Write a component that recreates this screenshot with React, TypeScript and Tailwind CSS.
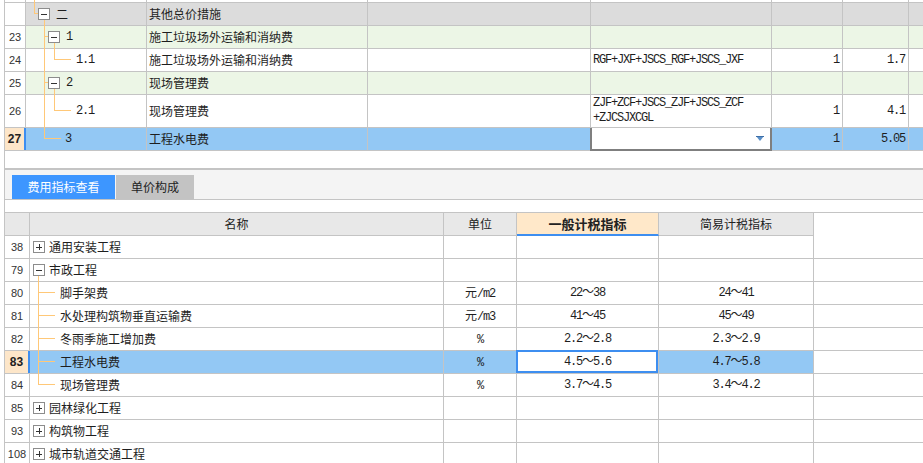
import React from "react";

const MONO = "font-['Liberation_Mono','Noto_Sans_CJK_SC',monospace] tracking-[-1.2px]";
const NUM = "font-['Liberation_Sans',sans-serif] text-[11px] text-[#333]";
const ORANGE = "absolute bg-[#ffc878]";

type TreeKind = "partial" | "root" | "group" | "leaf" | "last";

function Box({ plus, className }: { plus?: boolean; className: string }) {
  return (
    <span
      className={`absolute flex h-[12px] w-[12px] items-center justify-center border border-[#8c8c8c] bg-white ${className}`}
    >
      <span className="absolute h-px w-[6px] bg-[#333]" />
      {plus ? <span className="absolute h-[6px] w-px bg-[#333]" /> : null}
    </span>
  );
}

function TopTree({ kind, code, tall }: { kind: TreeKind; code?: string; tall?: boolean }) {
  const mid = tall ? "top-[15px]" : "top-[10px]";
  const toMid = tall ? "h-[16px]" : "h-[11px]";
  const pad = {
    partial: "pl-0",
    root: "pl-[30px]",
    group: "pl-[40px]",
    leaf: "pl-[50px]",
    last: "pl-[39px]",
  }[kind];

  return (
    <div className={`relative flex h-full items-center ${pad}`}>
      {kind === "partial" && <span className={`${ORANGE} left-[8px] top-0 -bottom-px w-px`} />}
      {kind === "root" && (
        <>
          <span className={`${ORANGE} left-[8px] top-0 h-[11px] w-px`} />
          <span className={`${ORANGE} left-[8px] top-[10px] h-px w-[4px]`} />
          <Box className="left-[12px] top-[5px]" />
          <span className={`${ORANGE} left-[18px] top-[17px] -bottom-px w-px`} />
        </>
      )}
      {kind === "group" && (
        <>
          <span className={`${ORANGE} left-[18px] top-0 -bottom-px w-px`} />
          <span className={`${ORANGE} left-[18px] top-[10px] h-px w-[4px]`} />
          <Box className="left-[22px] top-[5px]" />
          <span className={`${ORANGE} left-[28px] top-[17px] -bottom-px w-px`} />
        </>
      )}
      {kind === "leaf" && (
        <>
          <span className={`${ORANGE} left-[18px] top-0 -bottom-px w-px`} />
          <span className={`${ORANGE} left-[28px] top-0 w-px ${toMid}`} />
          <span className={`${ORANGE} left-[28px] h-px w-[17px] ${mid}`} />
        </>
      )}
      {kind === "last" && (
        <>
          <span className={`${ORANGE} left-[18px] top-0 w-px ${toMid}`} />
          <span className={`${ORANGE} left-[18px] h-px w-[17px] ${mid}`} />
        </>
      )}
      {code ? (
        <span className={/^[0-9.]+$/.test(code) ? `${MONO} text-[12px]` : "text-[12px]"}>{code}</span>
      ) : null}
    </div>
  );
}

type TopRowProps = {
  h: string;
  bg?: string;
  idx?: string;
  kind: TreeKind;
  code?: string;
  name?: string;
  formula?: React.ReactNode;
  qty?: string;
  val?: string;
  active?: boolean;
  tall?: boolean;
};

function TopRow({ h, bg = "bg-white", idx, kind, code, name, formula, qty, val, active, tall }: TopRowProps) {
  const cell = "h-full shrink-0 border-r border-[#c4c4c4]";
  const rowBg = active ? "bg-[#93c8f4]" : bg;
  return (
    <div className={`flex shrink-0 border-b border-[#c4c4c4] ${h}`}>
      <div
        className={`flex w-[21px] items-center justify-center ${cell} ${
          active
            ? "border-r-2 border-r-[#3d8ef0] bg-[#fde6c9] font-['Liberation_Sans',sans-serif] text-[12px] font-bold text-[#222]"
            : `bg-white ${NUM}`
        }`}
      >
        {idx}
      </div>
      <div className={`w-[121px] ${cell} ${rowBg}`}>
        <TopTree kind={kind} code={code} tall={tall} />
      </div>
      <div className={`flex w-[221px] items-center pl-[2px] ${cell} ${rowBg}`}>{name}</div>
      <div className={`w-[223px] ${cell} ${rowBg}`} />
      <div
        className={`relative flex w-[181px] items-center pl-[2px] ${cell} ${active ? "bg-white" : rowBg} ${MONO} text-[12px] leading-[15px]`}
      >
        {formula}
        {active ? (
          <div className="absolute -left-px top-0 -right-px -bottom-px border-2 border-t-0 border-[#7f7f7f]">
            <svg className="absolute right-[6px] top-[8px]" width="8" height="5" viewBox="0 0 8 5">
              <polygon points="0,0 8,0 4,5" fill="#5a8fc8" />
              <rect x="0" y="0" width="8" height="1" fill="#3d6fa8" />
            </svg>
          </div>
        ) : null}
      </div>
      <div className={`flex w-[71px] items-center justify-end pr-[3px] ${cell} ${rowBg} ${MONO} text-[12px]`}>
        {qty}
      </div>
      <div className={`flex w-[66px] items-center justify-end pr-[3px] ${cell} ${rowBg} ${MONO} text-[12px]`}>
        {val}
      </div>
      <div className={`h-full flex-1 ${rowBg}`} />
    </div>
  );
}

function TopGrid() {
  return (
    <div className="flex shrink-0 flex-col">
      <TopRow h="h-[3px]" kind="partial" />
      <TopRow h="h-[23px]" bg="bg-[#dcdcdc]" kind="root" code="二" name="其他总价措施" />
      <TopRow h="h-[23px]" bg="bg-[#ecf6e6]" idx="23" kind="group" code="1" name="施工垃圾场外运输和消纳费" />
      <TopRow
        h="h-[23px]"
        idx="24"
        kind="leaf"
        code="1.1"
        name="施工垃圾场外运输和消纳费"
        formula="RGF+JXF+JSCS_RGF+JSCS_JXF"
        qty="1"
        val="1.7"
      />
      <TopRow h="h-[23px]" bg="bg-[#ecf6e6]" idx="25" kind="group" code="2" name="现场管理费" />
      <TopRow
        h="h-[33px]"
        tall
        idx="26"
        kind="leaf"
        code="2.1"
        name="现场管理费"
        formula={
          <span>
            ZJF+ZCF+JSCS_ZJF+JSCS_ZCF
            <br />
            +ZJCSJXCGL
          </span>
        }
        qty="1"
        val="4.1"
      />
      <TopRow h="h-[23px]" idx="27" kind="last" code="3" name="工程水电费" qty="1" val="5.05" active />
    </div>
  );
}

type BottomKind = "plus" | "minus" | "child" | "lastChild";

type BottomRowProps = {
  idx: string;
  kind: BottomKind;
  name: string;
  unit?: React.ReactNode;
  gen?: string;
  simple?: string;
  active?: boolean;
};

function BottomRow({ idx, kind, name, unit, gen, simple, active }: BottomRowProps) {
  const cell = "h-full shrink-0 border-r border-[#c4c4c4]";
  const bg = active ? "bg-[#93c8f4]" : "bg-white";
  const isChild = kind === "child" || kind === "lastChild";
  return (
    <div className="flex h-[23px] shrink-0 border-b border-[#c4c4c4]">
      <div
        className={`flex w-[25px] items-center justify-center ${cell} ${
          active
            ? "border-r-2 border-r-[#3d8ef0] bg-[#fde6c9] font-['Liberation_Sans',sans-serif] text-[12px] font-bold text-[#222]"
            : NUM
        }`}
      >
        {idx}
      </div>
      <div className={`relative flex w-[414px] items-center ${isChild ? "pl-[30px]" : "pl-[19px]"} ${cell} ${bg}`}>
        {kind === "plus" && <Box plus className="left-[3px] top-[5px]" />}
        {kind === "minus" && (
          <>
            <Box className="left-[3px] top-[5px]" />
            <span className={`${ORANGE} left-[8px] top-[17px] -bottom-px w-px`} />
          </>
        )}
        {kind === "child" && <span className={`${ORANGE} left-[8px] top-0 -bottom-px w-px`} />}
        {kind === "lastChild" && <span className={`${ORANGE} left-[8px] top-0 h-[11px] w-px`} />}
        {isChild && <span className={`${ORANGE} left-[9px] top-[10px] h-px w-[16px]`} />}
        <span className="text-[12px]">{name}</span>
      </div>
      <div className={`flex w-[73px] items-center justify-center ${cell} ${bg} text-[12px]`}>{unit}</div>
      <div className={`relative flex w-[142px] items-center justify-center ${cell} bg-white ${MONO} text-[12px]`}>
        {gen}
        {active ? (
          <div className="absolute -left-px -top-px right-0 bottom-0 border-2 border-[#3d8ef0]" />
        ) : null}
      </div>
      <div className={`flex w-[155px] items-center justify-center ${cell} ${bg} ${MONO} text-[12px]`}>{simple}</div>
    </div>
  );
}

function Unit({ cn, rest }: { cn?: string; rest: string }) {
  return (
    <span>
      {cn}
      <span className={MONO}>{rest}</span>
    </span>
  );
}

function BottomTable() {
  return (
    <div className="flex shrink-0 flex-col border-t border-[#c4c4c4]">
      <div className="flex h-[23px] shrink-0 text-[12px] text-[#222]">
        <div className="h-full w-[25px] shrink-0 border-b border-r border-[#c4c4c4] bg-[#e8e8e8]" />
        <div className="flex h-full w-[414px] shrink-0 items-center justify-center border-b border-r border-[#c4c4c4] bg-[#e8e8e8]">
          名称
        </div>
        <div className="flex h-full w-[73px] shrink-0 items-center justify-center border-b border-r border-[#c4c4c4] bg-[#e8e8e8]">
          单位
        </div>
        <div className="flex h-full w-[142px] shrink-0 items-center justify-center border-r border-b-2 border-[#c4c4c4] border-b-[#3d8ef0] bg-[#ffe8c9] text-[13px] font-bold">
          一般计税指标
        </div>
        <div className="flex h-full w-[155px] shrink-0 items-center justify-center border-b border-r border-[#c4c4c4] bg-[#e8e8e8]">
          简易计税指标
        </div>
      </div>
      <BottomRow idx="38" kind="plus" name="通用安装工程" />
      <BottomRow idx="79" kind="minus" name="市政工程" />
      <BottomRow idx="80" kind="child" name="脚手架费" unit={<Unit cn="元" rest="/m2" />} gen="22～38" simple="24～41" />
      <BottomRow
        idx="81"
        kind="child"
        name="水处理构筑物垂直运输费"
        unit={<Unit cn="元" rest="/m3" />}
        gen="41～45"
        simple="45～49"
      />
      <BottomRow idx="82" kind="child" name="冬雨季施工增加费" unit={<Unit rest="%" />} gen="2.2～2.8" simple="2.3～2.9" />
      <BottomRow
        idx="83"
        kind="child"
        name="工程水电费"
        unit={<Unit rest="%" />}
        gen="4.5～5.6"
        simple="4.7～5.8"
        active
      />
      <BottomRow idx="84" kind="lastChild" name="现场管理费" unit={<Unit rest="%" />} gen="3.7～4.5" simple="3.4～4.2" />
      <BottomRow idx="85" kind="plus" name="园林绿化工程" />
      <BottomRow idx="93" kind="plus" name="构筑物工程" />
      <BottomRow idx="108" kind="plus" name="城市轨道交通工程" />
    </div>
  );
}

export default function App() {
  return (
    <div className="h-[463px] w-[923px] overflow-hidden bg-white pl-[4px] font-['Noto_Sans_CJK_SC',sans-serif] text-[12px] text-[#1e1e1e]">
      <div className="flex h-full flex-col border-l border-[#c4c4c4]">
        <TopGrid />
        <div className="h-[19px] shrink-0 border-b-2 border-[#c4c4c4]" />
        <div className="flex h-[30px] shrink-0 items-end gap-[1px] border-b border-[#c4c4c4] bg-[#f4f4f4] pl-[7px]">
          <div className="flex h-[24px] w-[103px] items-center justify-center bg-[#3d96ff] text-[12px] text-white">
            费用指标查看
          </div>
          <div className="flex h-[24px] w-[78px] items-center justify-center bg-[#c3c3c3] text-[12px] text-[#222]">
            单价构成
          </div>
        </div>
        <div className="h-[12px] shrink-0" />
        <BottomTable />
      </div>
    </div>
  );
}
